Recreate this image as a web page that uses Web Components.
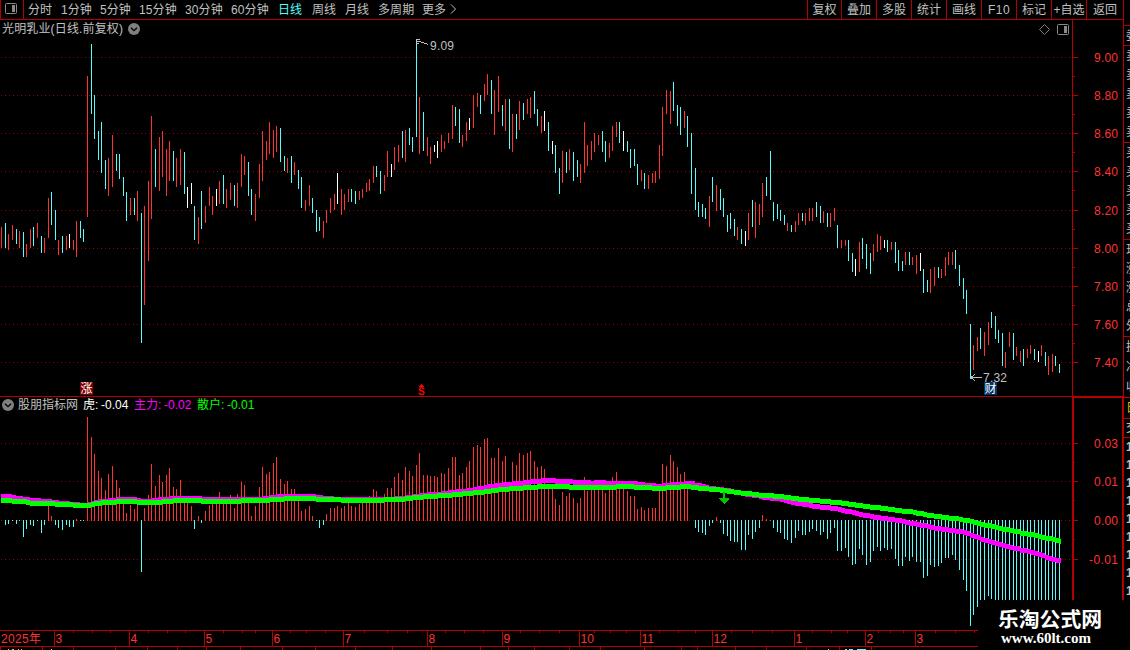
<!DOCTYPE html>
<html lang="zh-CN">
<head>
<meta charset="utf-8">
<title>光明乳业 日线</title>
<style>
  :root {
    --line: #b40000;
    --grid: #960000;
    --up: #ff3232;
    --down: #54fcfc;
    --text: #c0c0c0;
  }

  body {
    margin: 0;
    background: #000;
    color: var(--text);
    font: 12px/14px "Liberation Sans", "Noto Sans CJK SC", sans-serif;
    overflow: hidden;
  }
</style>
</head>
<body>
<quote-terminal></quote-terminal>

<script>
// x, kind (r = up, c = down, w = flat), high, low
const PRICE_BARS = `
1r227-248 5c223-248 8r234-250 12r225-240 16c229-244 19r231-248 23c232-257 26r244-257 30r229-248 33c227-246
37r223-238 41c236-253 44r238-253 48r198-238 51c192-225 55c210-240 58r240-255 62c236-253 66r236-250 69w234-248
73r240-250 76r221-257 80c221-238 83c229-242 87r76-217 91c44-114 94c95-139 98c131-160 101c122-173 105c160-189
108r158-196 112r135-187 116c154-171 119c154-179 123c177-196 126c192-221 130r198-215 134c198-215 137r191-221
141c213-343 144r206-305 148r181-261 151r116-219 155c149-187 159r137-191 162r131-177 166r149-196 169r141-181
173c151-181 176r158-187 180r149-185 184c152-194 187w187-208 191w183-204 194c206-240 198r217-244 201c191-229
205r206-223 209r187-206 212r196-215 216w189-206 219r181-204 223c175-204 226r189-208 230r183-200 234c185-206
237r183-208 241r154-187 244r156-175 248c162-196 251c189-215 255r194-221 259r164-198 262r131-181 266r141-160
269r122-154 273r130-158 276r126-152 280c128-162 284c156-171 287r158-173 291c156-183 294r162-175 298c170-189
301c177-208 305r200-211 309r185-206 312c198-213 316c210-232 319c217-231 323r221-238 326r210-223 330r198-213
334r194-210 337w173-204 341r189-215 344r194-210 348r189-202 351c189-202 355c191-204 359r191-200 362r189-198
366r183-192 369r179-191 373r166-183 376c166-177 380c171-194 384r175-191 387r151-177 391w164-177 394r147-170
398r145-162 402c131-158 405r130-162 409c128-145 412c137-152 416c43-137 419r97-154 423c112-151 427r137-156
430r147-164 434w145-152 437w141-158 441r135-152 444r141-149 448r133-143 452r105-139 455c107-126 459c109-143
462r135-147 466r122-141 469w118-130 473r95-128 477r93-107 480c95-114 484r84-101 487r74-95 491c80-114 494r90-135
498r76-112 502c105-126 505r99-131 509c99-149 512r114-152 516c114-139 519r101-130 523c103-120 527r99-114
530r97-118 534c91-114 537c109-126 541r116-133 544w111-131 548c122-151 552w141-154 555c145-173 559c168-194
562r151-183 566c152-173 569r149-170 573c152-181 577c160-177 580r164-183 584r122-173 587r145-166 591r141-160
594r133-152 598r135-145 602c131-152 605c141-162 609r143-158 612r126-151 616r122-137 619c122-143 623w131-151
627c141-152 630c149-168 634c149-166 637c164-185 641r170-181 644c173-189 648r175-189 652r173-183 655r171-183
659r145-179 662r107-156 666r90-114 670r91-124 673c82-111 677c105-126 680c107-135 684r111-128 687c116-147
691c133-194 695c168-210 698c202-217 702c204-217 705c208-219 709r196-227 712c177-202 716r185-211 720c189-210
723c198-217 727c215-232 730c213-229 734c219-236 737r227-240 741c229-244 745w231-246 748r213-240 752c200-227
755r202-238 759r204-225 762r183-217 766c177-196 770c151-200 773c202-221 777c204-219 780c210-221 784c215-225
787r223-231 791c225-232 795r221-232 798r213-225 802c213-221 805r213-225 809r208-221 812r208-221 816c202-217
820c206-223 823r211-223 827c213-227 830r213-227 834r208-221 837c225-248 841r240-248 845r240-246 848c240-261
852c253-272 855w259-276 859r242-272 862c238-259 866c244-269 870c253-274 873r244-261 877r234-252 880r236-250
884w240-248 887c240-252 891r242-250 895c242-263 898c250-271 902c261-271 905r252-265 909c252-265 912r257-265
916r255-274 920w253-271 923c269-293 927c280-292 930r269-293 934r267-286 938c267-278 941r269-278 945r257-276
948r252-265 952r252-265 955c250-269 959c265-286 963c278-299 966c290-314 970c324-379 973r345-370 977r337-351
980c328-349 984r332-356 988r322-345 991c312-328 995c316-339 998c330-343 1002c333-366 1005r352-368 1009r332-347
1013c333-360 1016r347-356 1020r351-362 1023c349-366 1027r349-358 1030r345-354 1034c349-360 1038w351-362
1041r345-356 1045c352-366 1048r356-375 1052r354-372 1055c356-366 1059c364-373`;

// x:y of the free end; the other end sits on the zero line
const HISTOGRAM = `
5:525 8:524 12:521 16:524 19:521 23:537 26:529 30:525 33:526 37:521 41:533 44:525 48:506 51:516 55:525 58:528
62:530 66:525 69:527 73:527 76:519 80:521 83:521 87:417 91:437 94:454 98:471 101:478 105:490 108:474 112:466
116:480 119:488 123:500 126:513 130:505 134:509 137:503 141:572 144:508 148:495 151:464 155:486 159:475 162:482
166:475 169:468 173:487 176:489 180:480 184:500 187:500 191:506 194:529 198:516 201:523 205:511 209:505 212:500
216:498 219:492 223:500 226:498 230:495 234:508 237:494 241:482 244:485 248:500 251:516 255:506 259:487 262:467
266:474 269:472 273:463 276:457 280:479 284:484 287:481 291:489 294:489 298:500 301:511 305:509 309:506 312:516
316:521 319:528 323:525 326:514 330:508 334:508 337:506 341:508 344:506 348:503 351:506 355:507 359:504 362:500
366:500 369:496 373:489 376:491 380:500 384:494 387:488 391:488 394:477 398:473 402:480 405:467 409:471 412:476
416:465 419:453 423:475 427:475 430:476 434:476 437:477 441:473 444:474 448:468 452:457 455:457 459:475 462:473
466:467 469:461 473:447 477:445 480:447 484:439 487:438 491:458 494:458 498:448 502:461 505:456 509:486 512:462
516:465 519:453 523:455 527:453 530:451 534:461 537:467 541:466 544:469 548:486 552:487 555:499 559:505 562:492
566:496 569:493 573:498 577:503 580:498 584:477 587:491 591:488 594:488 598:488 602:488 605:493 609:488 612:477
616:472 619:488 623:488 627:491 630:496 634:496 637:509 641:507 644:510 648:508 652:508 655:508 659:490 662:464
666:466 670:455 673:461 677:467 680:474 684:472 687:488 695:528 698:532 702:533 705:535 709:526 712:523 716:517
720:523 723:534 727:536 730:541 734:542 737:542 741:550 745:550 748:535 752:539 755:532 759:528 762:515 766:519
770:520 773:528 777:532 780:533 784:539 787:540 791:543 795:538 798:531 802:535 805:535 809:532 812:529 816:531
820:535 823:532 827:539 830:533 834:528 837:551 841:551 845:548 848:557 852:565 855:564 859:549 862:555 866:565
870:562 873:551 877:547 880:551 884:548 887:550 891:549 895:559 898:566 902:566 905:557 909:561 912:557 916:562
920:562 923:578 927:576 930:565 934:567 938:566 941:563 945:558 948:558 952:555 955:560 959:570 963:580 966:591
970:626 973:615 977:607 980:600 984:600 988:596 991:599 995:600 998:600 1002:600 1005:600 1009:600 1013:600
1016:600 1020:600 1023:600 1027:600 1030:600 1034:600 1038:600 1041:600 1045:600 1048:600 1052:600 1055:600 1059:600`;

const MAIN_LINE = `1,496.5 7,496.5 11,497.5 18,498.5 26,499.5 33,500.5 43,501.5 54,502.5 61,503.5 72,504.5 82,505.5 88,504.5
92,502.5 100,501.5 110,500.5 120,499.5 133,499.5 137,500.5 144,501.5 153,500.5 162,499.5 170,498.5 197,498.5
202,499.5 258,499.5 264,498.5 271,497.5 280,496.5 310,496.5 316,497.5 328,498.5 336,499.5 388,499.5 397,498.5
406,497.5 413,496.5 421,495.5 432,494.5 442,493.5 450,492.5 459,491.5 467,490.5 473,489.5 479,488.5 484,487.5
489,486.5 496,485.5 505,484.5 515,483.5 525,482.5 534,481.5 542,480.5 552,480.5 556,481.5 568,481.5 572,482.5
586,482.5 589,483.5 594,482.5 602,482.5 606,483.5 634,483.5 640,484.5 650,485.5 657,486.5 664,485.5 671,484.5
681,484.5 685,483.5 690,483.5 695,485 701,486.5 711,488.5 720,489.5 733,492 740,493 750,495 758,496.5 773,498.5
782,499.5 788,501.5 793,503 803,504.5 815,506.5 830,508.3 840,510 850,512.3 860,514.3 870,516.7 880,518.3
890,519.3 900,521.3 910,523.3 920,525 930,527.3 940,529.3 950,530.3 960,531.7 970,535 980,539 990,542.3
1000,544.7 1010,547.3 1020,550 1030,552.7 1040,555.3 1050,558.7 1061,561.5`;

const RETAIL_LINE = `1,500.5 9,500.5 13,501.5 22,501.5 26,502.5 33,503.5 52,503.5 56,504.5 70,504.5 74,505.5 85,505.5 89,504.5
95,503.5 106,502.5 118,501.5 133,501.5 139,502.5 156,502.5 160,501.5 170,501.5 174,500.5 198,500.5 202,501.5
238,501.5 242,500.5 264,500.5 268,499.5 278,499.5 282,498.5 313,498.5 317,499.5 339,499.5 343,500.5 381,500.5
385,499.5 402,499.5 406,498.5 416,497.5 428,496.5 444,495.5 454,494.5 468,493.5 477,492.5 484,491.5 492,490.5
502,489.5 514,488.5 527,487.5 542,486.5 565,486.5 569,487.5 612,487.5 616,486.5 632,486.5 636,487.5 648,487.5
652,488.5 663,488.5 666,487.5 677,487.5 681,486.5 688,486.5 693,487.5 703,488.5 713,489.5 722,490.5 730,491.5
737,492.5 744,493.5 753,494.5 765,495.5 777,496.5 787,497.5 794,498.5 802,499.5 814,500.5 825,501.5 840,503
850,504.5 860,506 870,507 880,508.3 890,509.3 900,511 910,512 920,513.7 930,515.7 940,517 950,518.3 960,519.5
970,521.7 980,524.3 990,526.3 1000,528.7 1010,530.3 1020,533 1030,534.7 1040,537 1050,539 1061,541.8`;

const KIND_COLOR = { r: 'var(--up)', c: 'var(--down)', w: '#fff' };

const rect = (x, y, w, h, fill) => `<rect x="${x}" y="${y}" width="${w}" height="${h}" fill="${fill}"/>`;
const gridLine = (y) =>
  `<line x1="1" x2="1072" y1="${y + 0.5}" y2="${y + 0.5}" stroke="var(--grid)" stroke-dasharray="1 3"/>`;

// Snap a polyline's points to the bar spacing so that it climbs in pixel steps
function steppedLine(source, color) {
  const points = source.trim().split(/\s+/).map((p) => p.split(',').map(Number));
  let out = '';
  let k = 0;
  for (let i = 0; i <= 296; i++) {
    const x = Math.round(1.2 + i * 3.574);
    while (k < points.length - 2 && points[k + 1][0] < x) k++;
    const [x0, y0] = points[k];
    const [x1, y1] = points[k + 1];
    const y = Math.round(y0 + ((y1 - y0) * (x - x0)) / (x1 - x0) - 0.5);
    out += rect(x, y - 2, i === 296 ? 2 : 4, 5, color);
  }
  return out;
}

function define(name, html, setup) {
  customElements.define(name, class extends HTMLElement {
    constructor() {
      super();
      this.attachShadow({ mode: 'open' }).innerHTML = html;
    }
    connectedCallback() {
      if (setup) setup(this, this.shadowRoot);
    }
  });
}

define('round-toggle', `
  <style>
    :host { display: block; width: 12px; height: 12px; flex: none; }
    svg { display: block; }
  </style>
  <svg width="12" height="12" viewBox="0 0 12 12">
    <circle cx="6" cy="6" r="6" fill="#808080"/>
    <path d="M3 4.7 6 7.7 9 4.7" fill="none" stroke="#000" stroke-width="1.3"/>
  </svg>`);

define('panel-icon', `
  <style>
    :host { display: block; flex: none; }
    svg { display: block; }
  </style>
  <svg width="12" height="11" viewBox="0 0 12 11">
    <rect x=".5" y=".5" width="11" height="10" rx="1" fill="none" stroke="#8a8a8a"/>
    <rect x="7" y="2" width="3" height="7" fill="#8a8a8a"/>
  </svg>`);

define('period-tab', `
  <style>
    :host { display: block; flex: none; height: 19px; line-height: 20px; white-space: nowrap; letter-spacing: .1px; }
    :host([active]) { color: var(--down); }
  </style>
  <slot></slot>`, (host) => {
  host.style.width = host.getAttribute('w') + 'px';
});

define('tool-button', `
  <style>
    :host {
      display: block; box-sizing: border-box; width: 35px; height: 19px; flex: none;
      border-left: 1px solid var(--line); line-height: 20px; text-align: center; white-space: nowrap;
    }
  </style>
  <slot></slot>`);

define('top-bar', `
  <style>
    :host { display: flex; height: 19px; border-bottom: 1px solid var(--line); }
    .menu {
      box-sizing: border-box; width: 24px; height: 19px; padding: 3px 0 0 4px;
      border: solid var(--line); border-width: 0 1px;
    }
    .periods { display: flex; flex: 1; padding-left: 4px; }
    .tools { display: flex; width: 316px; }
    svg { display: block; margin-top: 4px; }
  </style>
  <div class="menu"><panel-icon></panel-icon></div>
  <div class="periods">
    <period-tab w="33">分时</period-tab>
    <period-tab w="39">1分钟</period-tab>
    <period-tab w="39">5分钟</period-tab>
    <period-tab w="46">15分钟</period-tab>
    <period-tab w="46">30分钟</period-tab>
    <period-tab w="47">60分钟</period-tab>
    <period-tab w="34" active>日线</period-tab>
    <period-tab w="33">周线</period-tab>
    <period-tab w="33">月线</period-tab>
    <period-tab w="44">多周期</period-tab>
    <period-tab w="28">更多</period-tab>
    <svg width="7" height="10" viewBox="0 0 7 10"><path d="M1 .5 5.5 5 1 9.5" fill="none" stroke="#c0c0c0"/></svg>
  </div>
  <div class="tools">
    <tool-button style="width:34px">复权</tool-button>
    <tool-button>叠加</tool-button>
    <tool-button>多股</tool-button>
    <tool-button>统计</tool-button>
    <tool-button>画线</tool-button>
    <tool-button style="letter-spacing:.5px">F10</tool-button>
    <tool-button>标记</tool-button>
    <tool-button>+自选</tool-button>
    <tool-button style="width:37px">返回</tool-button>
  </div>`);

define('price-pane', `
  <style>
    :host { display: block; position: relative; height: 376px; }
    svg { display: block; }
    .title, .corner { position: absolute; display: flex; align-items: center; top: 2px; height: 14px; white-space: nowrap; }
    .title { left: 2px; gap: 6px; }
    .title span { width: 120px; line-height: 16px; letter-spacing: .15px; }
    .corner { right: 54px; gap: 7px; }
    .tag {
      position: absolute; top: 362px; width: 13px; height: 13px;
      color: #fff; font-size: 12px; line-height: 15px; text-align: center;
    }
  </style>
  <svg width="1123" height="376" viewBox="0 20 1123 376" shape-rendering="crispEdges"></svg>
  <div class="title"><span>光明乳业(日线.前复权)</span><round-toggle></round-toggle></div>
  <div class="corner">
    <svg width="11" height="11" viewBox="0 0 11 11"><path d="M5.5 .5 10.5 5.5 5.5 10.5 .5 5.5Z" fill="none" stroke="#808080"/></svg>
    <panel-icon></panel-icon>
  </div>
  <div class="tag" style="left:80px;background:#800000">涨</div>
  <div class="tag" style="left:984px;background:#003468">财</div>`, (host, root) => {
  const majors = [57, 95, 133, 171, 210, 248, 286, 324, 362];
  let out = majors.map(gridLine).join('');
  out += rect(1072, 20, 1, 376, 'var(--line)');
  majors.forEach((y, i) => {
    out += rect(1073, y, 5, 1, 'var(--line)');
    if (i < 8) out += rect(1073, y + 19, 2, 1, 'var(--line)');
    out += `<text x="1094" y="${y + 5}" fill="#ff3232" textLength="24">${(9 - i * 0.2).toFixed(2)}</text>`;
  });
  for (const [, x, kind, top, low] of PRICE_BARS.matchAll(/(\d+)([rcw])(\d+)-(\d+)/g)) {
    out += rect(x, top, 1, low - top, KIND_COLOR[kind]);
  }
  out += `
    <g fill="none" stroke="#c0c0c0">
      <path d="M416.5 40v3M416 39.5h4M417 41.5h3l4 1.5 4 1.5M417 43.5h2"/>
      <path d="M971 377.5h11M971 377.5l4-3M971 377.5l4 3"/>
    </g>
    <g fill="var(--text)">
      <text x="430" y="50" textLength="24">9.09</text>
      <text x="983" y="382" textLength="24">7.32</text>
    </g>
    <text x="418" y="395" fill="#f00" font-size="10" font-weight="bold">S</text>
    <path d="M419 387v-1h1v-1h1v-1h1v1h1v1h1v1z" fill="#f00"/>`;
  root.querySelector('svg').innerHTML = out;
});

define('indicator-pane', `
  <style>
    :host { display: block; position: relative; height: 234px; }
    svg { display: block; }
    .legend { position: absolute; left: 2px; top: 2px; display: flex; align-items: center; height: 14px; white-space: nowrap; }
    .name { width: 61px; margin: 0 4px 0 4px; }
    .tiger { width: 51px; color: #fff; }
    .main { width: 63px; color: #f0f; }
    .retail { color: #0f0; }
    .legend span { display: flex; line-height: 16px; }
    .legend i { font-style: normal; }
    .tiger i { width: 18px; }
    .main i, .retail i { width: 30px; }
  </style>
  <svg width="1124" height="234" viewBox="0 396 1124 234" shape-rendering="crispEdges"></svg>
  <div class="legend">
    <round-toggle></round-toggle>
    <span class="name">股朋指标网</span>
    <span class="tiger"><i>虎:</i>-0.04</span>
    <span class="main"><i>主力:</i>-0.02</span>
    <span class="retail"><i>散户:</i>-0.01</span>
  </div>`, (host, root) => {
  const labels = [[443, '0.03'], [481, '0.01'], [520, '0.00'], [559, '-0.01']];
  let out = rect(0, 396, 1072, 1, 'var(--line)') + rect(1072, 396, 52, 2, 'var(--line)')
    + rect(1072, 396, 2, 234, 'var(--line)') + rect(1122, 396, 2, 234, 'var(--line)');
  labels.forEach(([y, label], i) => {
    out += gridLine(y) + rect(1073, y, 5, 1, 'var(--line)');
    if (i < 3) out += rect(1073, y + 19, 2, 1, 'var(--line)');
    out += `<text x="1118" y="${y + 5}" fill="#ff3232" text-anchor="end" textLength="${label.length * 5 + 4}">${label}</text>`;
  });
  for (const [, x, y] of HISTOGRAM.matchAll(/(\d+):(\d+)/g)) {
    out += y <= 520 ? rect(x, y, 1, 521 - y, 'var(--up)') : rect(x, 520, 1, y - 520, 'var(--down)');
  }
  out += steppedLine(MAIN_LINE, '#f0f') + steppedLine(RETAIL_LINE, '#0f0');
  out += '<path d="M723 492h2v6h4v1l-4 5h-1l-5-5v-1h4z" fill="#00c800"/>';
  root.querySelector('svg').innerHTML = out;
});

define('time-axis', `
  <style>
    :host { display: block; height: 20px; }
    svg { display: block; }
  </style>
  <svg width="1123" height="20" viewBox="0 630 1123 20" shape-rendering="crispEdges"></svg>`, (host, root) => {
  const months = [[54, 3], [129, 4], [204, 5], [272, 6], [343, 7], [427, 8], [502, 9], [579, 10], [640, 11],
    [712, 12], [794, 1], [865, 2], [915, 3]];
  const ticks = [73, 92, 110, 148, 167, 185, 223, 242, 255, 290, 306, 325, 364, 387, 407, 445, 464, 483, 520, 539,
    559, 594, 610, 626, 659, 678, 695, 731, 752, 772, 812, 831, 847, 878, 890, 903, 935, 955, 974];
  const stubs = [0, 42, 73, 115, 147, 177, 206, 240, 282, 315, 355, 392, 431, 480, 508, 534, 569, 600, 644, 681, 697,
    735, 766, 806, 839, 871];
  let out = rect(0, 630, 1123, 1, 'var(--line)') + rect(0, 646, 1123, 1, 'var(--line)');
  out += '<text x="1" y="643" fill="#ff3232" textLength="40">2025年</text>';
  months.forEach(([x, label]) => {
    out += rect(x, 631, 1, 15, 'var(--line)') + `<text x="${x + 1.5}" y="643" fill="#ff3232">${label}</text>`;
  });
  ticks.forEach((x) => { out += rect(x, 631, 1, 2, 'var(--line)'); });
  stubs.forEach((x) => { out += rect(x, 647, 1, 3, 'var(--line)'); });
  // tops of the captions in the row that is cut off by the window edge
  out += rect(8, 649, 1, 1, '#c0c0c0') + rect(12, 649, 2, 1, '#c0c0c0') + rect(18, 649, 1, 1, '#c0c0c0')
    + rect(21, 649, 1, 1, '#c0c0c0') + rect(51, 649, 1, 1, '#c0c0c0') + rect(828, 649, 1, 1, '#c0c0c0')
    + rect(845, 649, 2, 1, 'var(--down)') + rect(849, 649, 4, 1, 'var(--down)') + rect(857, 649, 9, 1, 'var(--down)');
  root.querySelector('svg').innerHTML = out;
});

// Only the left edge of the quote column fits in the window
define('quote-strip', `
  <style>
    :host { display: flex; flex-direction: column; box-sizing: border-box; width: 7px; height: 650px; overflow: hidden; border-left: 1px solid var(--line); }
    .group { display: flex; flex-direction: column; justify-content: space-around; box-sizing: border-box; flex: none; border-top: 1px solid var(--line); padding-left: 2px; }
    .group span { width: 12px; line-height: 18px; }
    .top { height: 25px; flex: none; }
    .times span { font-weight: bold; }
  </style>
  <div class="top"></div>
  <div class="group" style="height:20px"><span>委</span></div>
  <div class="group" style="height:97px"><span>卖</span><span>卖</span><span>卖</span><span>卖</span><span>卖</span></div>
  <div class="group" style="height:97px"><span>买</span><span>买</span><span>买</span><span>买</span><span>买</span></div>
  <div class="group" style="height:97px"><span>现</span><span>涨</span><span>涨</span><span>总</span><span>外</span></div>
  <div class="group" style="height:61px"><span>换</span><span>净</span><span>收</span></div>
  <div class="group" style="height:21px;color:#c8c800"><span>日</span></div>
  <div class="group" style="height:19px"><span>交</span></div>
  <div class="group times" style="height:163px"><span>1</span><span>1</span><span>1</span><span>1</span><span>1</span><span>1</span><span>1</span><span>1</span><span>1</span></div>`);

define('site-mark', `
  <style>
    :host {
      display: flex; flex-direction: column; align-items: flex-start; box-sizing: border-box;
      width: 152px; height: 50px; padding: 6px 0 0 20px; background: #000; color: #fff; white-space: nowrap;
    }
    .name { font: bold 20.8px/25px "Noto Sans CJK SC", sans-serif; }
    .url { padding-left: 3px; font: bold 15px/15px "Liberation Serif", serif; }
  </style>
  <span class="name">乐淘公式网</span>
  <span class="url">www.60lt.com</span>`);

define('quote-terminal', `
  <style>
    :host { display: flex; position: relative; width: 1130px; height: 650px; overflow: hidden; background: #000; }
    .charts { display: flex; flex-direction: column; width: 1123px; }
    site-mark { position: absolute; right: 0; bottom: 0; }
  </style>
  <div class="charts">
    <top-bar></top-bar>
    <price-pane></price-pane>
    <indicator-pane></indicator-pane>
    <time-axis></time-axis>
  </div>
  <quote-strip></quote-strip>
  <site-mark></site-mark>`);
</script>
</body>
</html>
